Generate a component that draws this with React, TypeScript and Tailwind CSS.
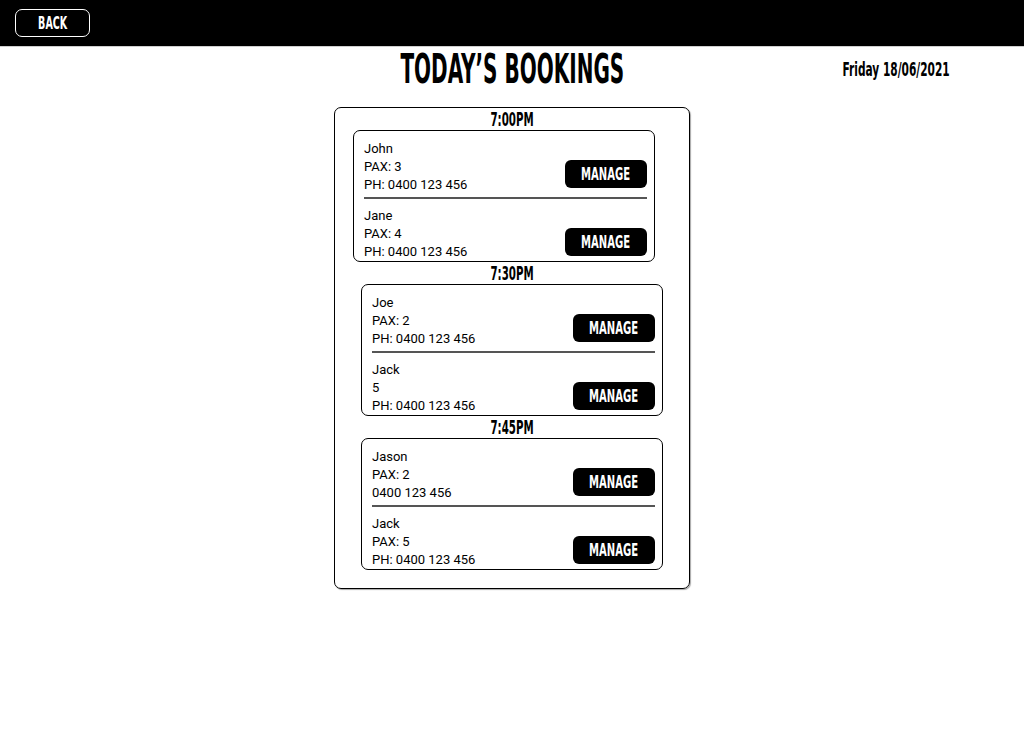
import React from "react";

type Booking = { name: string; pax: string; phone: string };
type Slot = { time: string; shift: boolean; bookings: Booking[] };

const slots: Slot[] = [
  {
    time: "7:00PM",
    shift: true,
    bookings: [
      { name: "John", pax: "PAX: 3", phone: "PH: 0400 123 456" },
      { name: "Jane", pax: "PAX: 4", phone: "PH: 0400 123 456" },
    ],
  },
  {
    time: "7:30PM",
    shift: false,
    bookings: [
      { name: "Joe", pax: "PAX: 2", phone: "PH: 0400 123 456" },
      { name: "Jack", pax: "5", phone: "PH: 0400 123 456" },
    ],
  },
  {
    time: "7:45PM",
    shift: false,
    bookings: [
      { name: "Jason", pax: "PAX: 2", phone: "0400 123 456" },
      { name: "Jack", pax: "PAX: 5", phone: "PH: 0400 123 456" },
    ],
  },
];

const BookingRow = ({ b, last }: { b: Booking; last: boolean }) => (
  <div className={`pl-[10px] pr-[7px] ${last ? "pt-[8px]" : "pt-[9px]"}`}>
    <div className={`flex items-end justify-between ${last ? "" : "border-b-2 border-[#555]"}`}>
      <div className={`text-[13px] leading-[18px] ${last ? "" : "pb-[3px]"}`}>
        <div>{b.name}</div>
        <div>{b.pax}</div>
        <div>{b.phone}</div>
      </div>
      <button
        className={`w-[82px] h-[28px] rounded-[6px] bg-black text-white flex items-center justify-center ${
          last ? "mb-[5px]" : "mb-[9px]"
        }`}
      >
        <span className="inline-block font-['Liberation_Sans_Narrow','DejaVu_Sans_Condensed',sans-serif] font-bold text-[18px] leading-none scale-x-[0.62]">
          MANAGE
        </span>
      </button>
    </div>
  </div>
);

export default function App() {
  return (
    <div className="min-h-[729px] w-full bg-white text-black font-['Roboto',sans-serif]">
      {/* Top bar */}
      <header className="h-[47px] bg-black border-b border-[#cfcfcf] flex items-center px-[15px]">
        <button className="w-[75px] h-[28px] border border-white rounded-[7px] text-white flex items-center justify-center">
          <span className="inline-block font-['Liberation_Sans_Narrow','DejaVu_Sans_Condensed',sans-serif] font-bold text-[18px] leading-none scale-x-[0.59]">
            BACK
          </span>
        </button>
      </header>

      {/* Title row */}
      <div className="grid grid-cols-[1fr_auto_1fr] items-center h-[48px]">
        <div />
        <h1 className="inline-block pb-[4px] font-['Liberation_Sans_Narrow','DejaVu_Sans_Condensed',sans-serif] font-bold text-[40px] leading-none scale-x-[0.556]">
          TODAY’S BOOKINGS
        </h1>
        <div className="justify-self-end pr-[74px]">
          <span className="inline-block origin-right font-['Liberation_Sans_Narrow','DejaVu_Sans_Condensed',sans-serif] font-bold text-[19px] leading-none scale-x-[0.62]">
            Friday 18/06/2021
          </span>
        </div>
      </div>

      {/* Bookings panel */}
      <div className="mx-auto mt-[12px] w-[356px] border border-black rounded-[7px] pb-[18px] shadow-[1px_1px_1px_rgba(0,0,0,0.35)]">
        {slots.map((s) => (
          <div key={s.time}>
            <div className="h-[22px] flex items-center justify-center">
              <span className="inline-block font-['Liberation_Sans_Narrow','DejaVu_Sans_Condensed',sans-serif] font-bold text-[19px] leading-none scale-x-[0.6]">
                {s.time}
              </span>
            </div>
            <div
              className={`w-[302px] border border-black rounded-[7px] ${s.shift ? "ml-[18px]" : "ml-[26px]"}`}
            >
              {s.bookings.map((b, i) => (
                <BookingRow key={i} b={b} last={i === s.bookings.length - 1} />
              ))}
            </div>
          </div>
        ))}
      </div>
    </div>
  );
}
